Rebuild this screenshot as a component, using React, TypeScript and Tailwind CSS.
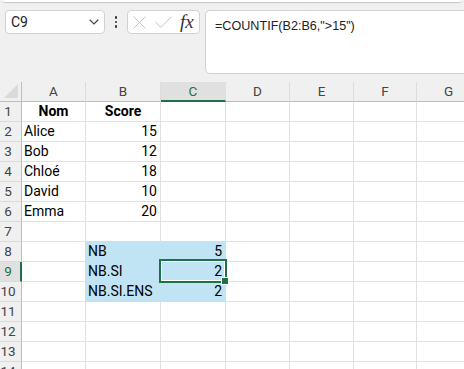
import React from "react";

const COLS = ["A", "B", "C", "D", "E", "F", "G"];
const COL_W = ["w-[64px]", "w-[75px]", "w-[65px]", "w-[64px]", "w-[64px]", "w-[63px]", "w-[64px]"];

type CellData = { v: string; align?: "left" | "right" | "center"; bold?: boolean };

// données de la feuille (ligne -> colonne -> valeur)
const data: Record<number, Record<string, CellData>> = {
  1: { A: { v: "Nom", align: "center", bold: true }, B: { v: "Score", align: "center", bold: true } },
  2: { A: { v: "Alice" }, B: { v: "15", align: "right" } },
  3: { A: { v: "Bob" }, B: { v: "12", align: "right" } },
  4: { A: { v: "Chloé" }, B: { v: "18", align: "right" } },
  5: { A: { v: "David" }, B: { v: "10", align: "right" } },
  6: { A: { v: "Emma" }, B: { v: "20", align: "right" } },
  8: { B: { v: "NB" }, C: { v: "5", align: "right" } },
  9: { B: { v: "NB.SI" }, C: { v: "2", align: "right" } },
  10: { B: { v: "NB.SI.ENS" }, C: { v: "2", align: "right" } },
};

const isFilled = (row: number, col: string) => row >= 8 && row <= 10 && (col === "B" || col === "C");

const Cell: React.FC<{ row: number; col: string; idx: number }> = ({ row, col, idx }) => {
  const cell = data[row]?.[col];
  const filled = isFilled(row, col);
  const active = row === 9 && col === "C";
  // la couleur de remplissage masque le quadrillage tout autour
  const rightBlue = filled || (col === "A" && row >= 8 && row <= 10);
  const bottomBlue = filled || (row === 7 && (col === "B" || col === "C"));

  const align =
    cell?.align === "right" ? "justify-end pr-[3px]" : cell?.align === "center" ? "justify-center" : "justify-start pl-[2px]";

  return (
    <div
      className={`${COL_W[idx]} h-[20px] shrink-0 flex items-center border-r border-b relative ${align} ${
        filled ? "bg-[#c1e4f5]" : "bg-white"
      } ${rightBlue ? "border-r-[#c1e4f5]" : "border-r-[#e1e1e1]"} ${
        bottomBlue ? "border-b-[#c1e4f5]" : "border-b-[#e1e1e1]"
      }`}
    >
      {cell && (
        <span className={`text-[14px] leading-[19px] text-black whitespace-nowrap ${cell.bold ? "font-bold" : ""}`}>
          {cell.v}
        </span>
      )}
      {active && (
        <>
          <div className="absolute left-[-2px] top-[-3px] right-[-2px] bottom-[-2px] border-2 border-[#1e7145] shadow-[inset_0_0_0_1px_#ffffff] pointer-events-none z-10" />
          <div className="absolute right-[-4px] bottom-[-4px] w-[8px] h-[8px] bg-[#1e7145] border border-white z-20" />
        </>
      )}
    </div>
  );
};

const App: React.FC = () => {
  const rows = Array.from({ length: 14 }, (_, i) => i + 1);

  return (
    <div className="w-[464px] h-[369px] overflow-hidden bg-[#f0f0f0] font-['Roboto','Liberation_Sans',sans-serif]">
      {/* Barre de formule */}
      <div className="h-[82px]">
        <div className="mx-[3px] h-[2px] bg-white rounded-b-[6px] shadow-[0_1px_1px_rgba(0,0,0,0.18)]" />
        <div className="flex items-start pl-[5px] mt-[8px]">
          <div className="w-[100px] h-[24px] bg-white border border-[#d1d1d1] rounded-[4px] flex items-center justify-between pl-[5px] pr-[5px]">
            <span className="text-[14px] text-[#222]">C9</span>
            <svg width="10" height="6" viewBox="0 0 10 6" fill="none">
              <path d="M0.7 0.8 L5 5 L9.3 0.8" stroke="#444" strokeWidth="1.2" />
            </svg>
          </div>
          <div className="w-[22px] h-[24px] flex flex-col items-center justify-center gap-[2px]">
            <span className="w-[2.5px] h-[2.5px] bg-[#333] rounded-full" />
            <span className="w-[2.5px] h-[2.5px] bg-[#333] rounded-full" />
            <span className="w-[2.5px] h-[2.5px] bg-[#333] rounded-full" />
          </div>
          <div className="w-[73px] h-[24px] bg-white border border-[#d1d1d1] rounded-[4px] flex items-center pl-[5px]">
            <svg width="13" height="13" viewBox="0 0 13 13" fill="none">
              <path d="M0.5 0.5 L12.5 12.5 M12.5 0.5 L0.5 12.5" stroke="#c4c4c4" strokeWidth="1" />
            </svg>
            <svg className="ml-[9px]" width="17" height="12" viewBox="0 0 17 12" fill="none">
              <path d="M0.5 6 L6 11.3 L16.5 0.7" stroke="#c4c4c4" strokeWidth="1" />
            </svg>
            <span className="ml-[8px] font-['Liberation_Serif',serif] italic text-[19px] leading-[20px] text-[#333]">fx</span>
          </div>
          <div className="ml-[5px] flex-1 mr-[-10px] h-[64px] bg-white border border-[#d1d1d1] rounded-[5px] pl-[9px] pt-[2px]">
            <span className="font-['Liberation_Sans',sans-serif] text-[12.6px] leading-[20px] text-[#222]">
              =COUNTIF(B2:B6,"&gt;15")
            </span>
          </div>
        </div>
      </div>

      {/* Grille */}
      <div className="flex flex-col">
        <div className="flex h-[20px]">
          <div className="w-[22px] h-[20px] shrink-0 border-r border-b border-[#bdbdbd] flex items-end justify-end pr-[3px] pb-[3px]">
            <svg width="14" height="14" viewBox="0 0 14 14">
              <polygon points="14,0 14,14 0,14" fill="#dadada" />
            </svg>
          </div>
          {COLS.map((c, i) => {
            const sel = c === "C";
            return (
              <div
                key={c}
                className={`${COL_W[i]} h-[20px] shrink-0 flex items-center justify-center border-r text-[13.5px] ${
                  sel
                    ? "bg-[#e0e0e0] border-b-2 border-b-[#1e7145] text-[#1e7145] border-r-[#e0e0e0]"
                    : "border-b border-b-[#bdbdbd] border-r-[#dcdcdc] text-[#444]"
                }`}
              >
                {c}
              </div>
            );
          })}
        </div>
        {rows.map((r) => {
          const sel = r === 9;
          return (
            <div key={r} className="flex h-[20px]">
              <div
                className={`w-[22px] h-[20px] shrink-0 border-b border-b-[#dadada] flex items-center ${
                  sel ? "bg-[#e0e0e0] border-r-2 border-r-[#1e7145] text-[#1e7145]" : "border-r border-r-[#bdbdbd] text-[#444]"
                }`}
              >
                <span className="w-[16px] text-center text-[13.5px] leading-[19px]">{r}</span>
              </div>
              {COLS.map((c, i) => (
                <Cell key={c} row={r} col={c} idx={i} />
              ))}
            </div>
          );
        })}
      </div>
    </div>
  );
};

export default App;
